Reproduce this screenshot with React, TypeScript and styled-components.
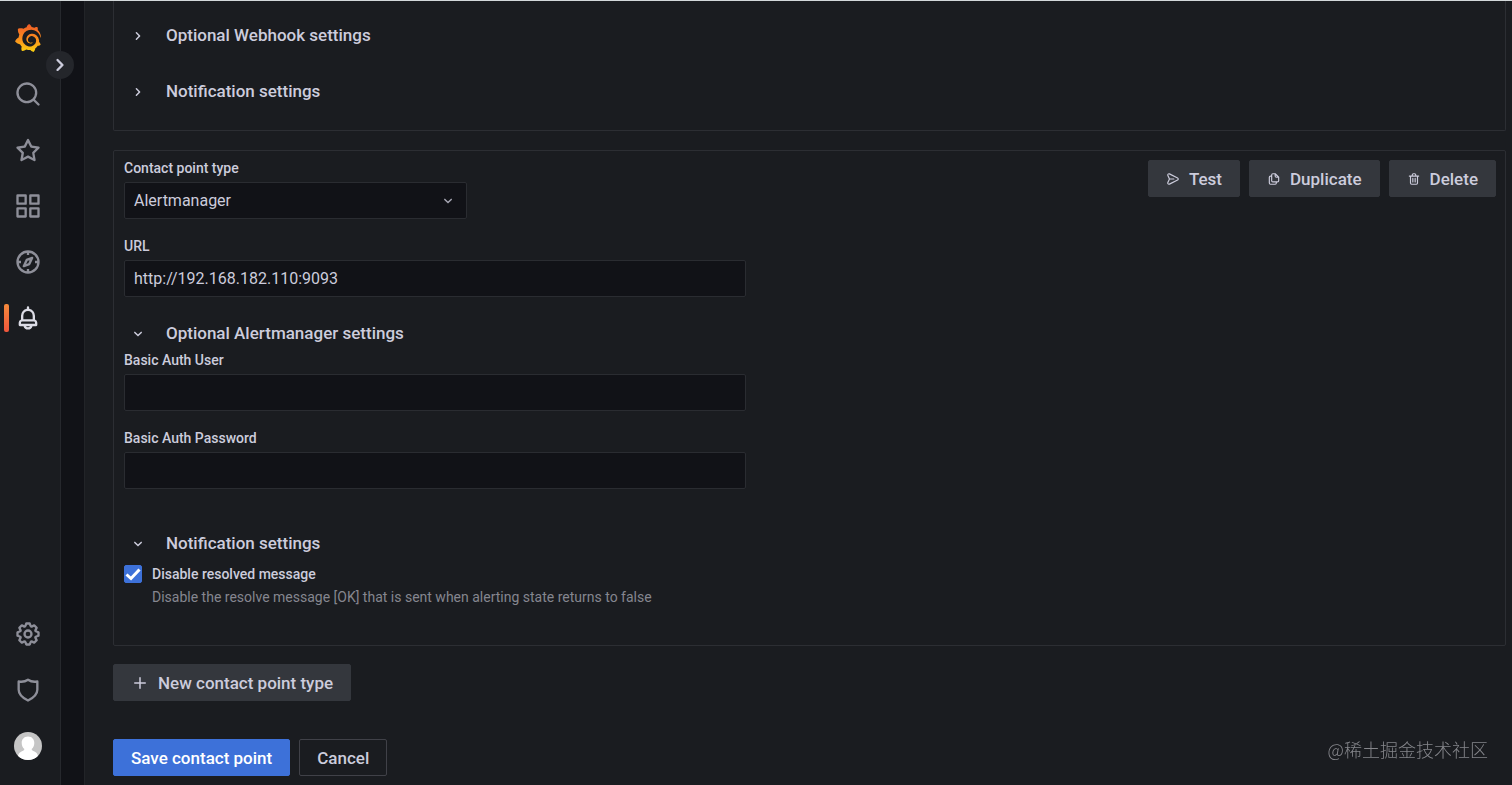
import React, { useId, useState } from "react";
import styled, { createGlobalStyle } from "styled-components";
import { SiGrafana } from "react-icons/si";

const color = {
  canvas: "#111217",
  surface: "#1a1c20",
  line: "#2c2e33",
  inputLine: "#2a2c31",
  text: "#ccccdc",
  muted: "#85868f",
  icon: "#8e8f99",
  secondary: "#34373d",
  primary: "#3d71d9",
};

const GlobalStyle = createGlobalStyle`
  *, *::before, *::after { box-sizing: border-box; }
  body {
    margin: 0;
    background: ${color.canvas};
    color: ${color.text};
    font: 400 16px/24px Roboto, "Noto Sans CJK SC", sans-serif;
  }
  button, input, select { font: inherit; color: inherit; }
`;

/* ---------- icons ---------- */

const paths = {
  search:
    "M21.71,20.29,18,16.61A9,9,0,1,0,16.61,18l3.68,3.68a1,1,0,0,0,1.42,0A1,1,0,0,0,21.71,20.29ZM11,18a7,7,0,1,1,7-7A7,7,0,0,1,11,18Z",
  star: "M22,9.67A1,1,0,0,0,21.14,9l-5.69-.83L12.9,3a1,1,0,0,0-1.8,0L8.55,8.16,2.86,9a1,1,0,0,0-.81.68,1,1,0,0,0,.25,1l4.13,4-1,5.68A1,1,0,0,0,6.9,21.44L12,18.77l5.1,2.67a.93.93,0,0,0,.46.12,1,1,0,0,0,.59-.19,1,1,0,0,0,.4-1l-1-5.68,4.13-4A1,1,0,0,0,22,9.67Zm-6.15,4a1,1,0,0,0-.29.88l.72,4.2-3.76-2a1.06,1.06,0,0,0-.94,0l-3.76,2,.72-4.2a1,1,0,0,0-.29-.88l-3-3,4.21-.61a1,1,0,0,0,.76-.55L12,5.7l1.88,3.82a1,1,0,0,0,.76.55l4.21.61Z",
  apps: "M10,13H3a1,1,0,0,0-1,1v7a1,1,0,0,0,1,1h7a1,1,0,0,0,1-1V14A1,1,0,0,0,10,13ZM9,20H4V15H9ZM21,2H14a1,1,0,0,0-1,1v7a1,1,0,0,0,1,1h7a1,1,0,0,0,1-1V3A1,1,0,0,0,21,2ZM20,9H15V4h5Zm1,4H14a1,1,0,0,0-1,1v7a1,1,0,0,0,1,1h7a1,1,0,0,0,1-1V14A1,1,0,0,0,21,13Zm-1,7H15V15h5ZM10,2H3A1,1,0,0,0,2,3v7a1,1,0,0,0,1,1h7a1,1,0,0,0,1-1V3A1,1,0,0,0,10,2ZM9,9H4V4H9Z",
  bell: "M18,13.18V10a6,6,0,0,0-5-5.91V3a1,1,0,0,0-2,0V4.09A6,6,0,0,0,6,10v3.18A3,3,0,0,0,4,16v2a1,1,0,0,0,1,1H8.14a4,4,0,0,0,7.72,0H19a1,1,0,0,0,1-1V16A3,3,0,0,0,18,13.18ZM8,10a4,4,0,0,1,8,0v3H8Zm4,10a2,2,0,0,1-1.72-1h3.44A2,2,0,0,1,12,20Zm6-3H6V16a1,1,0,0,1,1-1H17a1,1,0,0,1,1,1Z",
  cog: "M21.32,9.55l-1.89-.63.89-1.78A1,1,0,0,0,20.13,6L18,3.87a1,1,0,0,0-1.15-.19l-1.78.89-.63-1.89A1,1,0,0,0,13.5,2h-3a1,1,0,0,0-.95.68L8.92,4.57,7.14,3.68A1,1,0,0,0,6,3.87L3.87,6a1,1,0,0,0-.19,1.15l.89,1.78-1.89.63A1,1,0,0,0,2,10.5v3a1,1,0,0,0,.68.95l1.89.63-.89,1.78A1,1,0,0,0,3.87,18L6,20.13a1,1,0,0,0,1.15.19l1.78-.89.63,1.89a1,1,0,0,0,.95.68h3a1,1,0,0,0,.95-.68l.63-1.89,1.78.89A1,1,0,0,0,18,20.13L20.13,18a1,1,0,0,0,.19-1.15l-.89-1.78,1.89-.63A1,1,0,0,0,22,13.5v-3A1,1,0,0,0,21.32,9.55ZM20,12.78l-1.2.4A2,2,0,0,0,17.64,16l.57,1.14-1.1,1.1L16,17.64a2,2,0,0,0-2.79,1.16l-.4,1.2H11.22l-.4-1.2A2,2,0,0,0,8,17.64l-1.14.57-1.1-1.1L6.36,16A2,2,0,0,0,5.2,13.18L4,12.78V11.22l1.2-.4A2,2,0,0,0,6.36,8L5.79,6.89l1.1-1.1L8,6.36A2,2,0,0,0,10.82,5.2l.4-1.2h1.56l.4,1.2A2,2,0,0,0,16,6.36l1.14-.57,1.1,1.1L17.64,8a2,2,0,0,0,1.16,2.79l1.2.4ZM12,8a4,4,0,1,0,4,4A4,4,0,0,0,12,8Zm0,6a2,2,0,1,1,2-2A2,2,0,0,1,12,14Z",
  send: "M20.34,9.32l-14-7a3,3,0,0,0-4.08,3.9l2.4,5.37h0a1.06,1.06,0,0,1,0,.82l-2.4,5.37A3,3,0,0,0,5,22a3.14,3.14,0,0,0,1.35-.32l14-7a3,3,0,0,0,0-5.36Zm-.89,3.57-14,7a1,1,0,0,1-1.35-1.3l2.39-5.37A2,2,0,0,0,6.57,13h6.89a1,1,0,0,0,0-2H6.57a2,2,0,0,0-.08-.22L4.1,5.41a1,1,0,0,1,1.35-1.3l14,7a1,1,0,0,1,0,1.78Z",
  copy: "M21,8.94a1.31,1.31,0,0,0-.06-.27l0-.09a1.07,1.07,0,0,0-.19-.28h0l-6-6h0a1.07,1.07,0,0,0-.28-.19.32.32,0,0,0-.09,0A.88.88,0,0,0,14.05,2H10A3,3,0,0,0,7,5V6H6A3,3,0,0,0,3,9V19a3,3,0,0,0,3,3h8a3,3,0,0,0,3-3V18h1a3,3,0,0,0,3-3V9S21,9,21,8.94ZM15,5.41,17.59,8H16a1,1,0,0,1-1-1ZM15,19a1,1,0,0,1-1,1H6a1,1,0,0,1-1-1V9A1,1,0,0,1,6,8H7v7a3,3,0,0,0,3,3h5Zm4-4a1,1,0,0,1-1,1H10a1,1,0,0,1-1-1V5a1,1,0,0,1,1-1h3V7a3,3,0,0,0,3,3h3Z",
  trash:
    "M10,18a1,1,0,0,0,1-1V11a1,1,0,0,0-2,0v6A1,1,0,0,0,10,18ZM20,6H16V5a3,3,0,0,0-3-3H11A3,3,0,0,0,8,5V6H4A1,1,0,0,0,4,8H5V19a3,3,0,0,0,3,3h8a3,3,0,0,0,3-3V8h1a1,1,0,0,0,0-2ZM10,5a1,1,0,0,1,1-1h2a1,1,0,0,1,1,1V6H10Zm7,14a1,1,0,0,1-1,1H8a1,1,0,0,1-1-1V8H17Zm-3-1a1,1,0,0,0,1-1V11a1,1,0,0,0-2,0v6A1,1,0,0,0,14,18Z",
  right:
    "M14.83,11.29,10.59,7.05a1,1,0,0,0-1.42,0,1,1,0,0,0,0,1.41L12.71,12,9.17,15.54a1,1,0,0,0,0,1.41,1,1,0,0,0,.71.29,1,1,0,0,0,.71-.29l4.24-4.24A1,1,0,0,0,14.83,11.29Z",
  down: "M17,9.17a1,1,0,0,0-1.41,0L12,12.71,8.46,9.17a1,1,0,0,0-1.41,0,1,1,0,0,0,0,1.42l4.24,4.24a1,1,0,0,0,1.42,0L17,10.59A1,1,0,0,0,17,9.17Z",
  plus: "M19,11H13V5a1,1,0,0,0-2,0v6H5a1,1,0,0,0,0,2h6v6a1,1,0,0,0,2,0V13h6a1,1,0,0,0,0-2Z",
};

function Icon({ name, size }: { name: keyof typeof paths; size: number }) {
  return (
    <svg width={size} height={size} viewBox="0 0 24 24" fill="currentColor" aria-hidden="true">
      <path d={paths[name]} />
    </svg>
  );
}

const CompassIcon = () => (
  <svg width="28" height="28" viewBox="0 0 24 24" fill="none" stroke="currentColor" strokeWidth="2" aria-hidden="true">
    <circle cx="12" cy="12" r="9" />
    <path d="M12 3v3M12 18v3M3 12h3M18 12h3" />
    <path d="M15.6 8.4 10.9 10.2 8.4 15.6 13.1 13.8Z" strokeLinejoin="round" />
  </svg>
);

const ShieldIcon = () => (
  <svg width="28" height="28" viewBox="0 0 24 24" fill="none" stroke="currentColor" strokeWidth="2" strokeLinejoin="round" aria-hidden="true">
    <path d="M12 3.2C9.800 4.700 7 5.300 4 4.700V11.700C4 15.500 6.500 18.200 12 21C17.500 18.200 20 15.500 20 11.700V4.700C17 5.300 14.200 4.700 12 3.200Z" />
  </svg>
);

const AvatarIcon = () => (
  <svg width="28" height="28" viewBox="0 0 28 28" aria-hidden="true">
    <clipPath id="avatar-clip">
      <circle cx="14" cy="14" r="14" />
    </clipPath>
    <g clipPath="url(#avatar-clip)">
      <rect width="28" height="28" fill="#c5c5c5" />
      <path
        fill="#fff"
        d="M14 4.500C10 4.500 7.700 7.400 7.700 10.900C7.700 13.500 8.700 15.700 10.400 17C10.300 18.500 8.500 19 6.700 20C4.700 21.100 3.800 23 3.600 28H24.400C24.200 23 23.300 21.100 21.300 20C19.500 19 17.700 18.500 17.600 17C19.300 15.700 20.300 13.500 20.300 10.900C20.300 7.400 18 4.500 14 4.500Z"
      />
    </g>
  </svg>
);

const GradientDefs = styled.svg`
  position: absolute;
`;

const Logo = styled(SiGrafana)`
  && {
    fill: url(#logo-fill);
  }
`;

const LogoIcon = () => (
  <>
    <GradientDefs width="0" height="0" aria-hidden="true">
      <linearGradient id="logo-fill" x1="0" y1="1" x2="0" y2="0">
        <stop offset="0" stopColor="#fcd410" />
        <stop offset="0.4" stopColor="#fb961c" />
        <stop offset="1" stopColor="#f05a28" />
      </linearGradient>
    </GradientDefs>
    <Logo size={28} aria-hidden="true" />
  </>
);

/* ---------- frame ---------- */

const Page = styled.div`
  display: flex;
  min-height: 100vh;
  border-top: 1px solid #d3d8da;
`;

const Sidebar = styled.nav`
  position: relative;
  flex: none;
  display: flex;
  flex-direction: column;
  width: 61px;
  padding: 9px 0 11px;
  background: ${color.surface};
  border-right: 1px solid #26282d;
`;

const NavLink = styled.a<{ $active?: boolean }>`
  position: relative;
  display: grid;
  place-items: center;
  width: 56px;
  height: 56px;
  color: ${(p) => (p.$active ? "#dcdce6" : color.icon)};

  svg {
    display: block;
  }

  &::before {
    content: "";
    display: ${(p) => (p.$active ? "block" : "none")};
    position: absolute;
    left: 4px;
    top: 14px;
    width: 5px;
    height: 28px;
    border-radius: 2px;
    background: linear-gradient(#f58a3c, #f0553c);
  }
`;

const NavSpacer = styled.div`
  flex: 1;
`;

const SidebarToggle = styled.button`
  position: absolute;
  top: 50px;
  right: -14px;
  z-index: 1;
  display: grid;
  place-items: center;
  width: 28px;
  height: 28px;
  padding: 0;
  border: 0;
  border-radius: 50%;
  background: #24262b;
`;

const Main = styled.main`
  flex: 1;
  min-width: 0;
  margin-left: 23px;
  padding: 0 6px 9px 28px;
  background: ${color.surface};
  border-left: 1px solid #222428;
`;

const Card = styled.section<{ $continued?: boolean }>`
  display: flex;
  flex-direction: column;
  gap: ${(p) => (p.$continued ? 22 : 18)}px;
  margin-bottom: ${(p) => (p.$continued ? 19 : 18)}px;
  padding: ${(p) => (p.$continued ? "17px 9px 22px 10px" : "9px 9px 39px 10px")};
  border: 1px solid ${color.line};
  border-top-width: ${(p) => (p.$continued ? 0 : 1)}px;
  border-radius: ${(p) => (p.$continued ? "0 0 2px 2px" : "2px")};
`;

const CardTop = styled.div`
  display: flex;
  justify-content: space-between;
  align-items: flex-start;
`;

/* ---------- form ---------- */

const FieldBox = styled.div`
  max-width: 622px;
  margin-bottom: 19px;
`;

const Label = styled.label`
  display: block;
  margin-bottom: 6px;
  font-size: 14px;
  font-weight: 500;
  line-height: 16px;
`;

const TextInput = styled.input`
  display: block;
  width: 100%;
  height: 37px;
  padding: 0 9px;
  background: ${color.canvas};
  border: 1px solid ${color.inputLine};
  border-radius: 2px;
`;

const SelectBox = styled.div`
  position: relative;
  width: 343px;

  svg {
    position: absolute;
    right: 10px;
    top: 10px;
    color: #a5a5b2;
    pointer-events: none;
  }
`;

const Select = styled.select`
  display: block;
  appearance: none;
  width: 100%;
  height: 37px;
  padding: 0 32px 0 9px;
  background: ${color.canvas};
  border: 1px solid ${color.inputLine};
  border-radius: 2px;
`;

const Disclosure = styled.button`
  display: flex;
  align-items: center;
  gap: 19px;
  height: 34px;
  padding: 0 0 0 5px;
  border: 0;
  background: none;
  font-size: 17px;
  font-weight: 500;

  svg {
    margin-top: 2px;
  }
`;

const GroupBody = styled.div`
  padding-top: 2px;
`;

const CheckRow = styled.div`
  display: grid;
  grid-template-columns: 18px 1fr;
  column-gap: 10px;
  align-items: center;
  font-size: 14px;
`;

const CheckLabel = styled.label`
  font-weight: 500;
  line-height: 24px;
`;

const CheckHint = styled.p`
  grid-column: 2;
  margin: 2px 0 0;
  line-height: 18px;
  color: ${color.muted};
`;

const CheckSlot = styled.span`
  position: relative;
  display: block;
  width: 18px;
  height: 18px;

  svg {
    position: absolute;
    inset: 0;
    pointer-events: none;
  }
`;

const Checkbox = styled.input`
  display: block;
  appearance: none;
  width: 18px;
  height: 18px;
  margin: 0;
  border-radius: 2px;
  background: ${color.canvas};
  border: 1px solid ${color.inputLine};

  &:checked {
    background: ${color.primary};
    border-color: ${color.primary};
  }

  &:not(:checked) + svg {
    display: none;
  }
`;

/* ---------- buttons ---------- */

const buttonLooks = {
  secondary: `background: ${color.secondary}; border-color: ${color.secondary};`,
  primary: `background: ${color.primary}; border-color: ${color.primary}; color: #fff;`,
  outline: `background: transparent; border-color: #404148;`,
};

const Button = styled.button<{ $look: keyof typeof buttonLooks }>`
  display: inline-flex;
  align-items: center;
  gap: 9px;
  height: 37px;
  padding: 0 17px;
  border: 1px solid;
  border-radius: 2px;
  font-size: 17px;
  font-weight: 500;
  white-space: nowrap;
  ${(p) => buttonLooks[p.$look]}
`;

const ButtonRow = styled.div`
  display: flex;
  gap: 9px;
`;

const FormFooter = styled.div`
  display: flex;
  flex-direction: column;
  align-items: flex-start;
  gap: 38px;
`;

const Watermark = styled.div`
  position: fixed;
  right: 24px;
  bottom: 24px;
  font: 300 18px/24px "Noto Sans CJK SC", sans-serif;
  color: #85868b;
`;

/* ---------- parts ---------- */

function Field({ label, value = "", type = "text" }: { label: string; value?: string; type?: string }) {
  const id = useId();
  return (
    <FieldBox>
      <Label htmlFor={id}>{label}</Label>
      <TextInput id={id} type={type} defaultValue={value} />
    </FieldBox>
  );
}

function Section({
  title,
  open = false,
  children,
}: {
  title: string;
  open?: boolean;
  children?: React.ReactNode;
}) {
  const [isOpen, setOpen] = useState(open);
  return (
    <div>
      <Disclosure type="button" aria-expanded={isOpen} onClick={() => setOpen(!isOpen)}>
        <Icon name={isOpen ? "down" : "right"} size={18} />
        {title}
      </Disclosure>
      {isOpen && children && <GroupBody>{children}</GroupBody>}
    </div>
  );
}

export default function App() {
  return (
    <>
      <GlobalStyle />
      <Page>
        <Sidebar aria-label="Main">
          <NavLink href="#home" aria-label="Home">
            <LogoIcon />
          </NavLink>
          <NavLink href="#search" aria-label="Search">
            <Icon name="search" size={28} />
          </NavLink>
          <NavLink href="#starred" aria-label="Starred">
            <Icon name="star" size={28} />
          </NavLink>
          <NavLink href="#dashboards" aria-label="Dashboards">
            <Icon name="apps" size={28} />
          </NavLink>
          <NavLink href="#explore" aria-label="Explore">
            <CompassIcon />
          </NavLink>
          <NavLink href="#alerting" aria-label="Alerting" $active>
            <Icon name="bell" size={28} />
          </NavLink>
          <NavSpacer />
          <NavLink href="#configuration" aria-label="Configuration">
            <Icon name="cog" size={28} />
          </NavLink>
          <NavLink href="#admin" aria-label="Server admin">
            <ShieldIcon />
          </NavLink>
          <NavLink href="#profile" aria-label="Profile">
            <AvatarIcon />
          </NavLink>
          <SidebarToggle type="button" aria-label="Expand menu">
            <Icon name="right" size={28} />
          </SidebarToggle>
        </Sidebar>

        <Main>
          <Card $continued>
            <Section title="Optional Webhook settings" />
            <Section title="Notification settings" />
          </Card>

          <Card>
            <div>
              <CardTop>
                <FieldBox>
                  <Label htmlFor="contact-type">Contact point type</Label>
                  <SelectBox>
                    <Select id="contact-type" defaultValue="Alertmanager">
                      <option>Alertmanager</option>
                      <option>Webhook</option>
                      <option>Email</option>
                    </Select>
                    <Icon name="down" size={18} />
                  </SelectBox>
                </FieldBox>
                <ButtonRow>
                  <Button type="button" $look="secondary">
                    <Icon name="send" size={14} />
                    Test
                  </Button>
                  <Button type="button" $look="secondary">
                    <Icon name="copy" size={14} />
                    Duplicate
                  </Button>
                  <Button type="button" $look="secondary">
                    <Icon name="trash" size={14} />
                    Delete
                  </Button>
                </ButtonRow>
              </CardTop>

              <Field label="URL" value="http://192.168.182.110:9093" />

              <Section title="Optional Alertmanager settings" open>
                <Field label="Basic Auth User" />
                <Field label="Basic Auth Password" type="password" />
              </Section>
            </div>
            <Section title="Notification settings" open>
              <CheckRow>
                <CheckSlot>
                  <Checkbox type="checkbox" id="disable-resolved" defaultChecked />
                  <svg viewBox="0 0 18 18" fill="none" stroke="#fff" strokeWidth="3" aria-hidden="true">
                    <path d="M2.500 9.500 7 13.500 15.500 4.500" />
                  </svg>
                </CheckSlot>
                <CheckLabel htmlFor="disable-resolved">Disable resolved message</CheckLabel>
                <CheckHint>Disable the resolve message [OK] that is sent when alerting state returns to false</CheckHint>
              </CheckRow>
            </Section>
          </Card>

          <FormFooter>
            <Button type="button" $look="secondary">
              <Icon name="plus" size={18} />
              New contact point type
            </Button>
            <ButtonRow>
              <Button type="submit" $look="primary">
                Save contact point
              </Button>
              <Button type="button" $look="outline">
                Cancel
              </Button>
            </ButtonRow>
          </FormFooter>
        </Main>
      </Page>
      <Watermark>@稀土掘金技术社区</Watermark>
    </>
  );
}
